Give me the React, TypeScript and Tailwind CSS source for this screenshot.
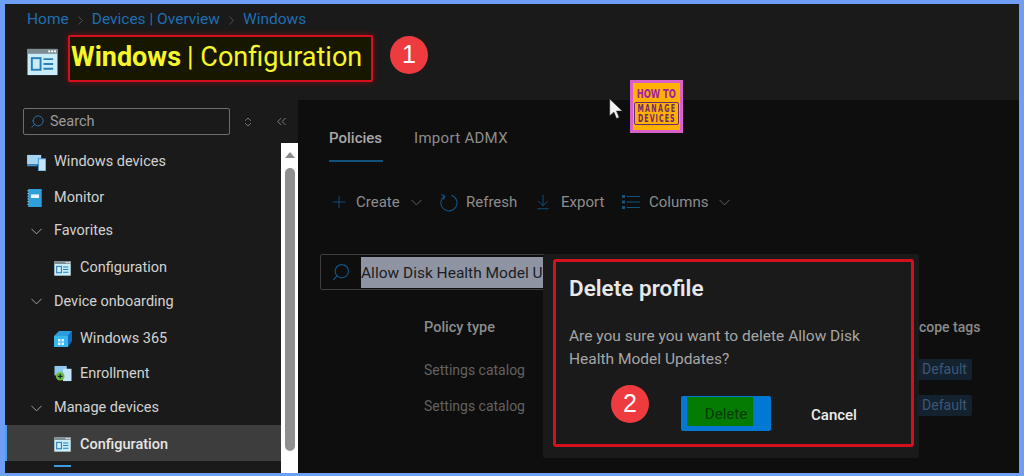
import { ChevronDown, ChevronRight, ChevronsLeft, ChevronsUpDown, Plus, Search, ArrowDownToLine } from 'lucide-react'

function ConfigIcon({ className }: { className: string }) {
  return (
    <svg viewBox="0 0 32 28" className={className}>
      <rect x="0.5" y="0.5" width="31" height="27" fill="#c8ecf8" />
      <rect x="0.5" y="0.5" width="31" height="5" fill="#7d8b92" />
      <rect x="22" y="2" width="2" height="2" fill="#fff" />
      <rect x="25" y="2" width="2" height="2" fill="#fff" />
      <rect x="28" y="2" width="2" height="2" fill="#fff" />
      <rect x="5" y="10" width="9" height="12" fill="none" stroke="#2a7fb8" strokeWidth="2" />
      <path d="M17 11h10M17 16h10M17 21h10" stroke="#2a7fb8" strokeWidth="2" />
    </svg>
  )
}

function DevicesIcon() {
  return (
    <svg viewBox="0 0 20 18" className="w-[19px] h-[17px]">
      <path d="M0 1h15v10H0z" fill="#a5d4f4" />
      <path d="M0 11h11v2H0z" fill="#3f8fd0" />
      <path d="M12 5h8v13h-8z" fill="#c4e6fa" stroke="#3f8fd0" />
    </svg>
  )
}

function MonitorIcon() {
  return (
    <svg viewBox="0 0 16 20" className="w-[15px] h-[18px]">
      <rect x="1" y="0" width="15" height="20" fill="#2f9fdc" />
      <rect x="4" y="6" width="9" height="4" fill="#e8f6fc" />
      <path d="M0 2h2M0 5h2M0 8h2M0 11h2M0 14h2M0 17h2" stroke="#9cc" strokeWidth="1" />
    </svg>
  )
}

function CloudPcIcon() {
  return (
    <svg viewBox="0 0 18 18" className="w-[18px] h-[18px]">
      <path d="M0 6 5 1h13l-4 5z" fill="#2a9de0" />
      <path d="M18 1v10l-4 6V6z" fill="#0f6cbd" />
      <path d="M0 6h14v11H0z" fill="#38b6f0" />
      <path d="M4 9h2.500v2.500H4zM7.500 9H10v2.500H7.500zM4 12.500h2.500V15H4zM7.500 12.500H10V15H7.500z" fill="#dff4ff" />
    </svg>
  )
}

function EnrollIcon() {
  return (
    <svg viewBox="0 0 18 18" className="w-[18px] h-[17px]">
      <path d="M0 1h13v10H0z" fill="#8cc8f0" />
      <path d="M9 4h9v13H9z" fill="#c4e4f8" />
      <circle cx="6" cy="12" r="4.500" fill="#6cbb3c" />
      <path d="M6 9.500v5M3.500 12h5" stroke="#123" strokeWidth="1.200" />
    </svg>
  )
}

function Row({ label, height, icon }: { label: string; height: string; icon: React.ReactNode }) {
  return (
    <div className={`flex items-center pl-[22px] ${height}`}>
      <span className="flex w-[27px] shrink-0">{icon}</span>
      <span>{label}</span>
    </div>
  )
}

function SubRow({ label, height, icon }: { label: string; height: string; icon: React.ReactNode }) {
  return (
    <div className={`flex items-center pl-[49px] ${height}`}>
      <span className="flex w-[26px] shrink-0">{icon}</span>
      <span>{label}</span>
    </div>
  )
}

function Group({ label, height }: { label: string; height: string }) {
  return (
    <div className={`flex items-center pl-[22px] ${height}`}>
      <ChevronDown className="w-[19px] h-[19px] mr-[8px] text-[#b5b5b5]" strokeWidth={1.1} />
      <span>{label}</span>
    </div>
  )
}

function ToolbarItem({ icon, label, caret, className }: { icon: React.ReactNode; label: string; caret?: boolean; className: string }) {
  return (
    <div className={`flex items-center ${className}`}>
      {icon}
      <span>{label}</span>
      {caret && <ChevronDown className="w-[19px] h-[19px] ml-[7px] text-[#6b6b6b]" strokeWidth={1.1} />}
    </div>
  )
}

function Badge({ n, className }: { n: string; className: string }) {
  return (
    <div className={`flex items-center justify-center w-[38px] h-[38px] rounded-full bg-[#ee3b3f] text-white text-[25px] font-['Liberation_Sans',sans-serif] shrink-0 ${className}`}>
      {n}
    </div>
  )
}

export default function App() {
  return (
    <div className="w-[1024px] h-[476px] bg-[#6f9ff5] pt-[4px] pl-[5px] pr-[5px] pb-[3px] font-['Roboto',sans-serif] overflow-hidden">
      <div className="relative w-full h-full bg-[#1a1a1a] flex flex-col overflow-hidden">
        {/* Header */}
        <div className="h-[96px] shrink-0 pl-[22px]">
          <div className="flex items-center h-[30px] pt-[2px] text-[15.5px] text-[#1f6fb0]">
            <span>Home</span>
            <ChevronRight className="w-[15px] h-[15px] mx-[4px] text-[#5c5c5c]" strokeWidth={1.25} />
            <span>Devices | Overview</span>
            <ChevronRight className="w-[15px] h-[15px] mx-[4px] text-[#5c5c5c]" strokeWidth={1.25} />
            <span>Windows</span>
          </div>
          <div className="flex items-center mt-[1px]">
            <ConfigIcon className="w-[31px] h-[28px] mt-[6px] mr-[10px]" />
            <div className="flex items-center h-[47px] w-[305px] pl-[1px] pb-[2px] rounded-[2px] border-[2px] border-[#d5101e] bg-[#171700] text-[#f6f62a] text-[27px] whitespace-nowrap shadow-[0_0_6px_#7a1010]">
              <span className="font-bold">Windows</span>
              <span className="ml-[6px]">| Configuration</span>
            </div>
            <Badge n="1" className="ml-[17px] mt-[-7px]" />
          </div>
        </div>

        <div className="flex flex-1 min-h-0">
          {/* Sidebar */}
          <div className="w-[293px] shrink-0 flex flex-col text-[14.5px] text-[#d2d2d2]">
            <div className="flex items-center h-[43px] pl-[18px] shrink-0">
              <div className="flex items-center w-[207px] h-[27px] border border-[#6e6e6e] rounded-[2px] pl-[6px] text-[#9a9a9a]">
                <Search className="w-[15px] h-[15px] -scale-x-100 text-[#2a74b5] mr-[5px]" strokeWidth={1.5} />
                <span>Search</span>
              </div>
              <ChevronsUpDown className="w-[12px] h-[12px] ml-[12px] text-[#9a9a9a]" strokeWidth={1.5} />
              <ChevronsLeft className="w-[15px] h-[15px] ml-[20px] text-[#9a9a9a]" strokeWidth={1.25} />
            </div>
            <div className="flex flex-1 min-h-0">
              <div className="flex-1 min-w-0 overflow-hidden">
                <Row label="Windows devices" height="h-[36px] pt-[2px]" icon={<DevicesIcon />} />
                <Row label="Monitor" height="h-[36px] pt-[2px]" icon={<MonitorIcon />} />
                <Group label="Favorites" height="h-[32px]" />
                <SubRow label="Configuration" height="h-[40px] pt-[2px]" icon={<ConfigIcon className="w-[17px] h-[15px]" />} />
                <Group label="Device onboarding" height="h-[29px]" />
                <SubRow label="Windows 365" height="h-[42px] pt-[4px]" icon={<CloudPcIcon />} />
                <SubRow label="Enrollment" height="h-[31px]" icon={<EnrollIcon />} />
                <Group label="Manage devices" height="h-[36px] pt-[2px]" />
                <div className="flex items-center h-[36px] pl-[47px] pt-[3px] bg-[#3d3d3d] border-l-[2px] border-[#4a9fe8] font-medium text-[#e6e6e6]">
                  <span className="flex w-[26px] shrink-0"><ConfigIcon className="w-[17px] h-[15px]" /></span>
                  <span>Configuration</span>
                </div>
                <div className="h-[6px] pl-[49px] pt-[4px]">
                  <div className="w-[17px] h-[2px] bg-[#3a9de0]" />
                </div>
              </div>
              {/* Scrollbar */}
              <div className="w-[17px] shrink-0 bg-white flex flex-col items-center">
                <div className="mt-[9px] w-0 h-0 border-x-[5px] border-x-transparent border-b-[6px] border-b-[#8a8a8a]" />
                <div className="mt-[10px] w-[10px] h-[283px] rounded-[5px] bg-[#8f8f8f]" />
              </div>
            </div>
          </div>

          {/* Main */}
          <div className="flex-1 min-w-0 bg-[#0e0e0e] text-[15px] text-[#8d8d8d]">
            <div className="flex pl-[31px] pt-[27px] h-[62px]">
              <div className="w-[54px] h-[35px] border-b-[2px] border-[#12527f] font-medium text-[#a8a8a8]">Policies</div>
              <div className="ml-[31px] tracking-[0.3px]">Import ADMX</div>
            </div>
            <div className="flex items-center pl-[31px] mt-[27px] h-[26px]">
              <ToolbarItem className="w-[110px]" icon={<Plus className="w-[20px] h-[20px] mr-[7px] text-[#12527f]" strokeWidth={1.1} />} label="Create" caret />
              <ToolbarItem className="w-[95px]" icon={
                <svg viewBox="0 0 20 20" className="w-[19px] h-[19px] mr-[8px]">
                  <path d="M6 3.200A8.500 8.500 0 1 0 13 2.300" fill="none" stroke="#12527f" strokeWidth="1.200" />
                  <path d="M2.500 1.500 6 3.200 4.800 7" fill="none" stroke="#12527f" strokeWidth="1.200" />
                </svg>
              } label="Refresh" />
              <ToolbarItem className="w-[88px]" icon={<ArrowDownToLine className="w-[18px] h-[18px] mr-[9px] text-[#12527f]" strokeWidth={1.25} />} label="Export" />
              <ToolbarItem className="" icon={
                <svg viewBox="0 0 18 14" className="w-[18px] h-[14px] mr-[9px]">
                  <path d="M5 1.500h13M5 7h13M5 12.500h13" stroke="#12527f" strokeWidth="1.200" />
                  <path d="M0 0h3v3H0zM0 5.500h3v3H0zM0 11h3v3H0z" fill="#12527f" />
                </svg>
              } label="Columns" caret />
            </div>
            <div className="flex items-center ml-[22px] mt-[39px] w-[235px] h-[36px] border border-[#3e3e3e] rounded-[2px] overflow-hidden">
              <div className="w-[40px] h-full shrink-0 flex items-center justify-center">
                <Search className="w-[20px] h-[20px] -scale-x-100 text-[#12527f]" strokeWidth={1.5} />
              </div>
              <div className="h-[31px] flex-1 flex items-center pt-[3px] bg-[#8f94a3] text-[15.5px] text-[#1a1c22] whitespace-nowrap">Allow Disk Health Model U</div>
            </div>
            <div className="flex pl-[126px] mt-[27px] h-[20px] text-[14.5px] font-medium text-[#8b8b8b]">
              <span>Policy type</span>
            </div>
            <div className="pl-[126px] mt-[23px] text-[14px] text-[#626262]">Settings catalog</div>
            <div className="pl-[126px] mt-[15px] text-[14px] text-[#626262]">Settings catalog</div>
          </div>
        </div>

        {/* Delete dialog */}
        <div className="absolute left-[538px] top-[250px] w-[376px] h-[204px] bg-[#1a1a1a] pl-[10px] pt-[5px] pr-[5px] pb-[11px] rounded-[2px]">
          <div className="w-full h-full border-[3px] border-[#d5101e] rounded-[3px] pl-[13px] pt-[12px]">
            <div className="text-[22.5px] font-semibold text-[#e8e8e8] leading-[28px]">Delete profile</div>
            <div className="mt-[23px] w-[320px] text-[15.5px] leading-[23px] text-[#a6a6a6]">
              Are you sure you want to delete Allow Disk Health Model Updates?
            </div>
            <div className="flex items-start mt-[20px] pl-[42px]">
              <Badge n="2" className="mt-[-6px]" />
              <div className="ml-[32px] mt-[5px] w-[90px] h-[35px] bg-[#0078d4] rounded-[2px] pl-[6px]">
                <div className="flex items-center justify-center w-[66px] h-[29px] mt-[1px] pt-[5px] pl-[12px] bg-[#047c04] text-[#053a05] text-[15px]">Delete</div>
              </div>
              <div className="ml-[40px] mt-[13px] text-[15px] font-medium text-[#eeeeee]">Cancel</div>
            </div>
          </div>
        </div>

        {/* Scope tags column, behind the dialog's edge */}
        <div className="absolute left-[914px] top-[313px] text-[14px] text-[#8b8b8b] font-medium">cope tags</div>
        <div className="absolute left-[912px] top-[355px] w-[55px] h-[21px] flex items-center justify-center bg-[#14212e] rounded-[2px] text-[14px] text-[#3c5874]">Default</div>
        <div className="absolute left-[912px] top-[391px] w-[55px] h-[21px] flex items-center justify-center bg-[#14212e] rounded-[2px] text-[14px] text-[#3c5874]">Default</div>

        {/* Cursor + watermark */}
        <svg viewBox="0 0 12 20" className="absolute left-[604px] top-[95px] w-[14px] h-[21px]">
          <path d="M0 0v16l4-3.500 2.500 6 2.500-1-2.500-6H12z" fill="#f2f2f2" stroke="#222" strokeWidth="0.5" />
        </svg>
        <div className="absolute left-[625px] top-[76px] w-[53px] h-[53px] bg-[#ffb000] border-[3px] border-[#d860c8] flex flex-col items-center font-['DejaVu_Sans',sans-serif] font-stretch-condensed font-bold text-[#a01fa8] leading-none">
          <div className="text-[13px] mt-[4px] scale-x-[0.72] whitespace-nowrap">HOW TO</div>
          <div className="mt-[2px] w-[45px] h-[23px] border border-[#6a2a70] rounded-[2px] text-[10px] leading-[10px] flex flex-col items-center justify-center text-[#6a2a70]">
            <div className="scale-x-[0.7] tracking-[2px]">MANAGE</div>
            <div className="scale-x-[0.7] tracking-[1.5px]">DEVICES</div>
          </div>
        </div>
      </div>
    </div>
  )
}
